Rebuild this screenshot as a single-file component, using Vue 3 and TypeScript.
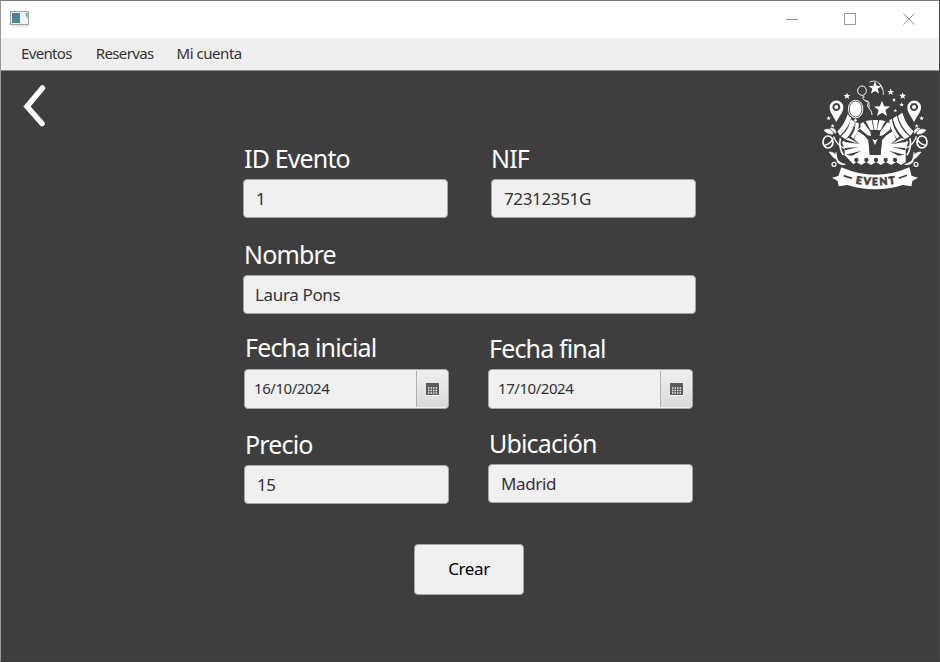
<script setup lang="ts">
import { ref } from 'vue'

interface Field {
  id: string
  label: string
  value: string
  kind: 'text' | 'date'
}

const menus: string[] = ['Eventos', 'Reservas', 'Mi cuenta']

const rows = ref<Field[][]>([
  [
    { id: 'evento', label: 'ID Evento', value: '1', kind: 'text' },
    { id: 'nif', label: 'NIF', value: '72312351G', kind: 'text' },
  ],
  [{ id: 'nombre', label: 'Nombre', value: 'Laura Pons', kind: 'text' }],
  [
    { id: 'inicial', label: 'Fecha inicial', value: '16/10/2024', kind: 'date' },
    { id: 'final', label: 'Fecha final', value: '17/10/2024', kind: 'date' },
  ],
  [
    { id: 'precio', label: 'Precio', value: '15', kind: 'text' },
    { id: 'ubicacion', label: 'Ubicación', value: 'Madrid', kind: 'text' },
  ],
])

const star = 'M0-10 2.6-3.2 9.7-3.1 4.1 1.3 6 8.3 0 4.4-6 8.3-4.1 1.3-9.7-3.1-2.6-3.2Z'
const stars: [number, number, number][] = [
  [111, 78, 1.05], [242, 66, 1.05], [278, 78, 1.1], [252, 90, 0.6], [275, 104, 0.7],
  [256, 122, 0.55], [216, 117, 2.5], [195, 54, 2], [56, 145, 0.7], [68, 168, 0.65],
  [335, 145, 0.7], [320, 168, 0.65], [162, 81, 0.3],
]
const rim: number[] = [139, 169, 198, 227, 255]
</script>

<template>
  <div class="window">
    <header class="titlebar">
      <svg class="app-icon" width="20" height="17" viewBox="0 0 20 17">
        <rect x="1.5" y="1.5" width="18" height="13" fill="#f2f3f3" stroke="#9aa0a5" />
        <rect x="3" y="3" width="8" height="10" fill="#438f84" />
        <path d="M3 3h8v3L3 11z" fill="#4c7fa0" />
        <path d="M16.500 3h2v6l-1-2z" fill="#4aa377" />
        <path d="M2 16h18" stroke="#d2d4d5" />
      </svg>
      <svg class="controls" width="130" height="13" viewBox="0 0 130 13" fill="none" stroke="#999">
        <path d="M0 6.500h12M58.500.5h11v11h-11zM117.500.5l11 11M128.500.5l-11 11" />
      </svg>
    </header>
    <nav class="menubar">
      <span v-for="m in menus" :key="m" class="menu">{{ m }}</span>
    </nav>
    <main class="content">
      <div class="side">
        <svg class="back" width="24" height="44" viewBox="0 0 24 44">
          <path d="M19.500 4 4 22.500 19 39.500" fill="none" stroke="#fff" stroke-width="5.500" stroke-linecap="round" />
        </svg>
      </div>
      <form class="form" @submit.prevent>
        <div v-for="(row, r) in rows" :key="r" :class="['row', 'row-' + r]">
          <div v-for="f in row" :key="f.id" :class="['field', f.id]">
            <label class="label">{{ f.label }}</label>
            <div :class="['box', f.kind]">
              <span class="value">{{ f.value }}</span>
              <span v-if="f.kind === 'date'" class="picker">
                <svg width="13" height="13" viewBox="0 0 13 13">
                  <path d="M0 12.500h13" stroke="#fff" />
                  <rect width="13" height="12" fill="#5b5b5b" />
                  <path d="M2 5h9M2 7.500h9M2 10h9" stroke="#eee" stroke-width="1.300" stroke-dasharray="1.400 1.130" />
                </svg>
              </span>
            </div>
          </div>
        </div>
        <button class="submit" type="submit">Crear</button>
      </form>
      <div class="brand">
        <svg width="130" height="130" viewBox="0 0 390 390">
          <g fill="#fff">
            <path v-for="(s, i) in stars" :key="i" :d="star" :transform="`translate(${s[0]} ${s[1]}) scale(${s[2]})`" />
            <path fill-rule="evenodd" d="M79 156C69 137 59 127 59 112a20 20 0 0 1 41 0c0 15-11 25-21 44zM79 99a12 12 0 1 0 .1 0z" />
            <circle cx="79" cy="111" r="6" />
            <path fill-rule="evenodd" d="M312 156c-10-19-20-29-20-44a20 20 0 0 1 41 0c0 15-11 25-21 44zM312 99a12 12 0 1 0 .1 0z" />
            <circle cx="312" cy="111" r="6" />
            <!-- curtains -->
            <path d="M114 130C107 153 96 172 82 184l8 13c19-18 30-37 34-57z" />
            <path d="M122 148c-4 23-14 39-29 51l14 9c16-16 25-35 27-53z" />
            <path d="M137 157c1 18-8 39-24 53l13 2c14-18 22-36 20-53z" />
            <path d="M277 128c7 23 17 42 34 56l-10 13c-19-18-32-37-37-60z" />
            <path d="M261 137c4 25 20 48 38 62l-14 9c-19-19-34-42-36-63z" />
            <path d="M246 147c1 20 13 45 33 63l-13 2c-18-21-28-43-28-62z" />
            <!-- stage -->
            <path d="M167 153l18-3 6 30h-10zM188 150h16l-4 30h-7zM208 150l18 3-15 28-10-1z" />
            <path d="M152 160l8-3 21 28 2 13-10-2-22-18zM240 160l-8-3-21 28-2 13 10-2 22-18z" />
            <path d="M143 184l32 20 5 53H104V238l-8-22 18-12 18 5z" />
            <path d="M248 184l-32 20-5 53h76V238l8-22-18-12-18 5z" />
            <path d="M104 255h183v21l-14 9-14-9-16 9-15-9-16 9-14-9-15 9-15-9-14 9-15-9-9 7z" />
          </g>
          <g fill="#3e3e3e">
            <path d="M103 207l43 15-43-6zM105 234l41-3-41 10zM120 197l31 27-38-22zM288 207l-43 15 43-6zM286 234l-41-3 41 10zM271 197l-31 27 38-22z" />
            <path d="M108 254l46-12-28 15zM283 254l-46-12 28 15z" />
            <path d="M147 178l30 22h37l30-22-28 33-4 43h-33l-4-43z" />
            <circle cx="195" cy="189" r="10" />
            <circle v-for="x in rim" :key="x" :cx="x" cy="270" r="6.500" />
          </g>
          <path d="M187 207l8 18 8-18-8 4z" fill="#fff" />
          <path d="M91 205c-4 20 1 38 9 50M300 205c4 20-1 38-9 50" fill="none" stroke="#fff" stroke-width="5" />
          <!-- balloons and ribbons -->
          <ellipse cx="137" cy="117" rx="27" ry="31" fill="#3e3e3e" />
          <ellipse cx="137" cy="117" rx="23" ry="28" fill="#fff" />
          <ellipse cx="137" cy="117" rx="19" ry="24" fill="#fff" stroke="#3e3e3e" stroke-width="2.500" />
          <path d="M137 145l-6 8h11z" fill="#fff" />
          <g fill="none" stroke="#fff" stroke-width="3">
            <ellipse cx="156" cy="62" rx="13" ry="14" />
            <path d="M161 77c-6 8 1 15 10 17 9 3-3 10 4 18 5 7 11 12 11 23M166 93c12-2 12 7 11 20" />
            <path d="M178 37c12-7 25-3 30 4s13 15 12 34M207 39c9 8 7 14 11 19" stroke-width="2.500" />
            <path d="M137 151c-9 21 9 24-2 41M143 180l15-10" />
          </g>
          <!-- side flourishes -->
          <g id="flourish" fill="none" stroke="#fff" stroke-width="5">
            <ellipse cx="54" cy="216" rx="15" ry="18" />
            <path d="M44 226c14-4 22-9 25-22M71 199c6 22 20 30 32 36" stroke-width="4" />
            <path d="M42 181c12-8 26-1 27 11-13 1-19-4-27-11zM60 175c14-1 20 6 16 16" fill="#fff" stroke-width="2" />
            <path d="M57 246c14 0 23 7 25 23-12-4-16-13-25-23zM78 247c-2 20 9 32 28 36-8 3-20-1-25-8z" fill="#fff" stroke-width="2" />
            <circle cx="72" cy="283" r="6" stroke-width="3.500" />
          </g>
          <use href="#flourish" transform="translate(390 0) scale(-1 1)" />
          <path d="M94 292q102 45 204 0l7 26 19 5-17 10-3 16-26-4q-82 26-166 0l-26 4-3-16-17-10 19-5z" fill="#fff" />
          <path d="M101 317l25 8M266 325l25-9" stroke="#3e3e3e" stroke-width="5" />
          <path id="banner-line" d="M137 340Q197 352 266 339" fill="none" />
          <text class="logo-text"><textPath href="#banner-line">EVENT</textPath></text>
        </svg>
      </div>
    </main>
  </div>
</template>

<style>
body {
  margin: 0;
  overflow: hidden;
  background: #3e3e3e;
}
</style>

<style scoped>
.window {
  box-sizing: border-box;
  width: 940px;
  height: 662px;
  display: flex;
  flex-direction: column;
  border: 1px solid #999;
  border-right-color: #454545;
  border-bottom-color: #393737;
  border-top-color: #777;
  background: #3e3e3e;
  font-family: "Noto Sans", "Open Sans", sans-serif;
  color: #333;
}
.titlebar {
  height: 37px;
  display: flex;
  justify-content: space-between;
  align-items: center;
  padding: 0 23px 0 8px;
  background: #fff;
}
.app-icon {
  margin-bottom: 2px;
}
.menubar {
  box-sizing: border-box;
  height: 33px;
  display: flex;
  align-items: center;
  padding: 0 0 2px 20px;
  background: #efefef;
  border-bottom: 1px solid #8f8f8f;
  font-size: 15px;
}
.menu {
  margin-right: 24px;
  letter-spacing: -0.65px;
  line-height: 20px;
}
.menu:last-child {
  margin-left: -1px;
  letter-spacing: -0.45px;
}
.content {
  flex: 1;
  display: flex;
}
.side {
  flex: none;
  width: 242px;
}
.back {
  display: block;
  margin: 13px 0 0 22px;
}
.form {
  flex: none;
  width: 453px;
  padding-top: 72px;
}
.row {
  display: flex;
  justify-content: space-between;
  height: 96px;
}
.row-1 {
  height: 94px;
}
.row-2,
.row-3 {
  padding: 0 3px 0 1px;
}
.row-2 {
  height: 95px;
}
.row-3 {
  height: 116px;
}
.field {
  width: 205px;
}
.field.nombre {
  width: 453px;
}
.precio {
  padding-top: 1px;
}
.label {
  display: block;
  height: 36px;
  padding-left: 1px;
  font-size: 25px;
  line-height: 30px;
  letter-spacing: -0.85px;
  color: #fff;
  white-space: nowrap;
}
.nif .label {
  padding-left: 0;
}
.inicial .label {
  margin-top: -1px;
  padding-bottom: 1px;
}
.box {
  box-sizing: border-box;
  height: 39px;
  display: flex;
  align-items: center;
  padding-left: 12px;
  background: #f0f0f0;
  border: 1px solid #a5a5a5;
  border-radius: 4px;
  font-size: 17px;
  letter-spacing: -0.35px;
}
.nombre .box {
  padding-left: 11px;
}
.box.date {
  height: 40px;
  padding: 0 0 0 9px;
  justify-content: space-between;
  font-size: 15px;
  letter-spacing: -0.45px;
}
.date .value {
  padding-bottom: 2px;
}
.picker {
  box-sizing: border-box;
  width: 32px;
  height: 36px;
  display: flex;
  align-items: center;
  justify-content: center;
  border-left: 1px solid #b0b0b0;
  border-radius: 0 3px 3px 0;
  background: linear-gradient(#efefef, #dadada);
}
.submit {
  box-sizing: border-box;
  display: block;
  width: 110px;
  height: 51px;
  margin-left: 171px;
  padding: 0 0 2px;
  border: 1px solid #a5a5a5;
  border-radius: 4px;
  background: #f0f0f0;
  color: #000;
  font: 17px "Noto Sans", "Open Sans", sans-serif;
  letter-spacing: -0.4px;
}
.brand {
  flex: none;
  width: 129px;
  margin-left: 114px;
}
.brand svg {
  display: block;
  margin-top: -1px;
}
.logo-text {
  font: 900 31px Lato, "Open Sans", sans-serif;
  fill: #3e3e3e;
  stroke: #3e3e3e;
  stroke-width: 2px;
  letter-spacing: 5px;
}
</style>
